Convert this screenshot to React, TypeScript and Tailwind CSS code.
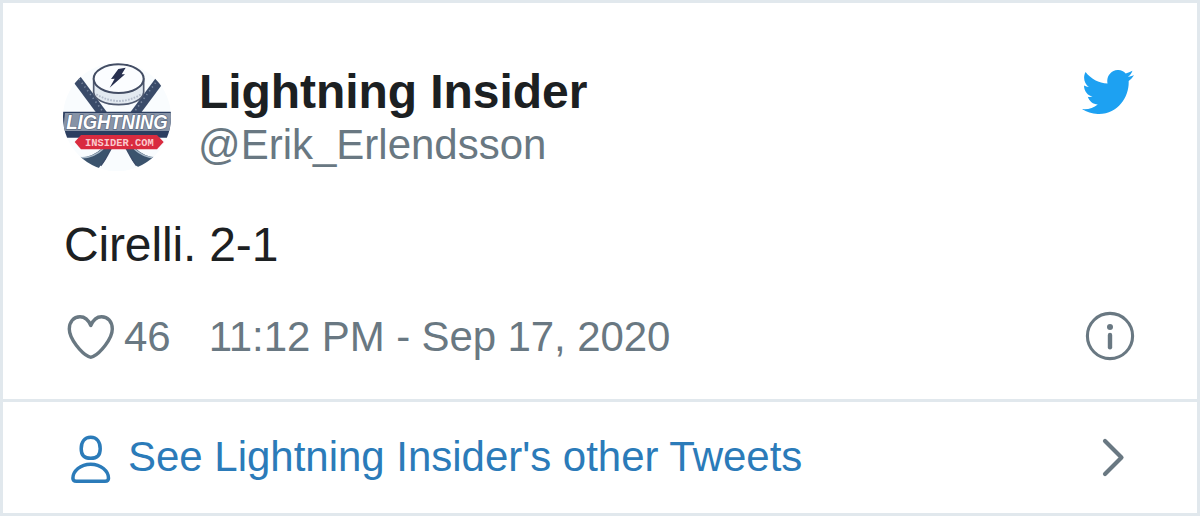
function Avatar() {
  return (
    <svg viewBox="38 38 324 324" className="size-[108px] shrink-0 overflow-hidden rounded-full" aria-hidden="true">
      <rect x="38" y="38" width="324" height="324" fill="#f9fcfe" />
      <g stroke="#3a4b69" strokeWidth="27" fill="none">
        <path d="M76 82 L268 340" />
        <path d="M334 82 L142 340" />
      </g>
      <g stroke="#77869e" strokeWidth="5" strokeDasharray="4 10" fill="none">
        <path d="M86 86 L158 184" />
        <path d="M324 86 L252 184" />
      </g>
      <path d="M74 318 Q112 332 160 290 L180 298 L140 362 L86 350 Z" fill="#3b536d" />
      <path d="M336 318 Q298 332 250 290 L230 298 L270 362 L324 350 Z" fill="#3b536d" />
      <path d="M90 322 Q128 324 158 296" stroke="#a9b9c8" strokeWidth="5" fill="none" />
      <path d="M320 322 Q282 324 252 296" stroke="#a9b9c8" strokeWidth="5" fill="none" />
      <path d="M205 258 L262 362 L148 362 Z" fill="#f9fcfe" />
      <path d="M130 84 V126 C132 148 164 163 205 163 C246 163 278 148 280 126 V84" fill="#e3eaf1" stroke="#505a70" strokeWidth="5" />
      <path d="M138 132 Q205 172 272 132" fill="none" stroke="#b4bdcc" strokeWidth="6" strokeDasharray="5 4" />
      <ellipse cx="205" cy="85" rx="75" ry="43" fill="#fbfdff" stroke="#434d64" strokeWidth="6" />
      <path d="M204 56 L226 52 L214 72 L224 72 L178 112 L193 85 L182 86 Z" fill="#27304f" />
      <path d="M38 184 H362 V262 H38 Z" fill="#2c3e60" />
      <path d="M44 188 H362 V242 H38 Z" fill="#8793a6" />
      <text x="48" y="235" textLength="304" lengthAdjust="spacingAndGlyphs" fontSize="58" fontWeight="700" fontStyle="italic" fontFamily="Liberation Sans, sans-serif" fill="#ffffff" stroke="#5a6980" strokeWidth="4" paintOrder="stroke">LIGHTNING</text>
      <path d="M92 254 H320 L340 275 L320 297 H92 L73 275 Z" fill="#d92b3f" />
      <text x="104" y="286" textLength="206" lengthAdjust="spacingAndGlyphs" fontSize="30" fontWeight="700" fontFamily="Liberation Mono, monospace" fill="#fbc9cd">INSIDER.COM</text>
    </svg>
  );
}

function Bird() {
  return (
    <svg viewBox="0 2.25 24 19.5" preserveAspectRatio="none" className="mt-[7px] mr-[3px] h-11 w-[52px] shrink-0" fill="#1da1f2" aria-hidden="true">
      <path d="M23.954 4.569c-.885.389-1.83.654-2.825.775 1.014-.611 1.794-1.574 2.163-2.723-.951.555-2.005.959-3.127 1.184-.896-.959-2.173-1.559-3.591-1.559-2.717 0-4.92 2.203-4.92 4.917 0 .39.045.765.127 1.124C7.691 8.094 4.066 6.13 1.64 3.161c-.427.722-.666 1.561-.666 2.475 0 1.71.87 3.213 2.188 4.096-.807-.026-1.566-.248-2.228-.616v.061c0 2.385 1.693 4.374 3.946 4.827-.413.111-.849.171-1.296.171-.314 0-.615-.03-.916-.086.631 1.953 2.445 3.377 4.604 3.417-1.68 1.319-3.809 2.105-6.102 2.105-.39 0-.779-.023-1.17-.067 2.189 1.394 4.768 2.209 7.557 2.209 9.054 0 13.999-7.496 13.999-13.986 0-.209 0-.42-.015-.63.961-.689 1.8-1.56 2.46-2.548l-.047-.02z" />
    </svg>
  );
}

function Heart() {
  return (
    <svg viewBox="0 0 54 54" className="size-[54px] shrink-0" fill="none" stroke="currentColor" strokeWidth="3.4" strokeLinejoin="round" aria-hidden="true">
      <path d="M27.8 15.5C25.5 10 21.5 6.7 17 6.7C10.5 6.7 6.3 12 6.3 19C6.3 29 18.5 43 25.5 46.6Q27.8 47.8 30.1 46.6C37.1 43 49.3 29 49.3 19C49.3 12 45 6.7 38.5 6.7C34 6.7 30.1 10 27.8 15.5Z" />
    </svg>
  );
}

function Info() {
  return (
    <svg viewBox="0 0 54 54" className="size-[54px] shrink-0" fill="none" stroke="currentColor" aria-hidden="true">
      <circle cx="27" cy="26" r="22.6" strokeWidth="3.1" />
      <circle cx="27" cy="17" r="3" fill="currentColor" stroke="none" />
      <path d="M27 25V37.3" strokeWidth="4.4" strokeLinecap="round" />
    </svg>
  );
}

function Person() {
  return (
    <svg viewBox="0 0 54 54" className="size-[54px] shrink-0" fill="none" stroke="currentColor" strokeWidth="3.5" strokeLinejoin="round" aria-hidden="true">
      <path d="M27.7 7.3C34 7.3 37.2 12 37.2 18.7C37.2 25.5 34.3 28.3 27.7 28.3C21.1 28.3 18.2 25.5 18.2 18.7C18.2 12 21.4 7.3 27.7 7.3Z" />
      <path d="M27.7 34.2C38 34.2 45.5 41 45.5 48.2Q45.5 51.2 42 51.2H13.4Q9.9 51.2 9.9 48.2C9.9 41 17.4 34.2 27.7 34.2Z" />
    </svg>
  );
}

export default function App() {
  return (
    <div className="min-h-[525px] bg-white font-['Liberation_Sans',Arial,sans-serif]">
      <article className="flex h-[516px] w-[1200px] flex-col border-[3px] border-[#e1e8ed] bg-white">
        <div className="h-[399px] shrink-0 border-b-[3px] border-[#e1e8ed] px-[60px] pt-[60px]">
          <header className="flex h-[108px] items-start">
            <Avatar />
            <div className="ml-[27px] flex-1 pt-0.5">
              <div className="h-[53px] pl-px text-[48px] leading-[54px] font-bold tracking-[-0.06px] text-[#1c2022]">Lightning Insider</div>
              <div className="text-[42px] leading-[54px] text-[#697882]">@Erik_Erlendsson</div>
            </div>
            <Bird />
          </header>
          <p className="mt-[42px] pl-px text-[48px] leading-[63px] tracking-[-0.15px] text-[#1c2022]">Cirelli. 2-1</p>
          <footer className="mt-[34px] flex h-[54px] items-center text-[42px] leading-[54px] text-[#697882]">
            <Heart />
            <span className="ml-[7px]">46</span>
            <time className="ml-[38px] flex-1 tracking-[-0.1px]">11:12 PM - Sep 17, 2020</time>
            <Info />
          </footer>
        </div>
        <a className="flex flex-1 items-center px-[60px] pb-0.5 text-[42px] leading-[54px] text-[#2b7bb9]">
          <Person />
          <span className="ml-[11px] flex-1 tracking-[-0.02px]">See Lightning Insider's other Tweets</span>
          <svg viewBox="0 0 54 54" className="size-[54px] shrink-0 text-[#697882]" fill="none" stroke="currentColor" strokeWidth="4.2" strokeLinecap="round" strokeLinejoin="round" aria-hidden="true">
            <path d="M22 11L38.5 27.5L22 44" />
          </svg>
        </a>
      </article>
    </div>
  );
}
